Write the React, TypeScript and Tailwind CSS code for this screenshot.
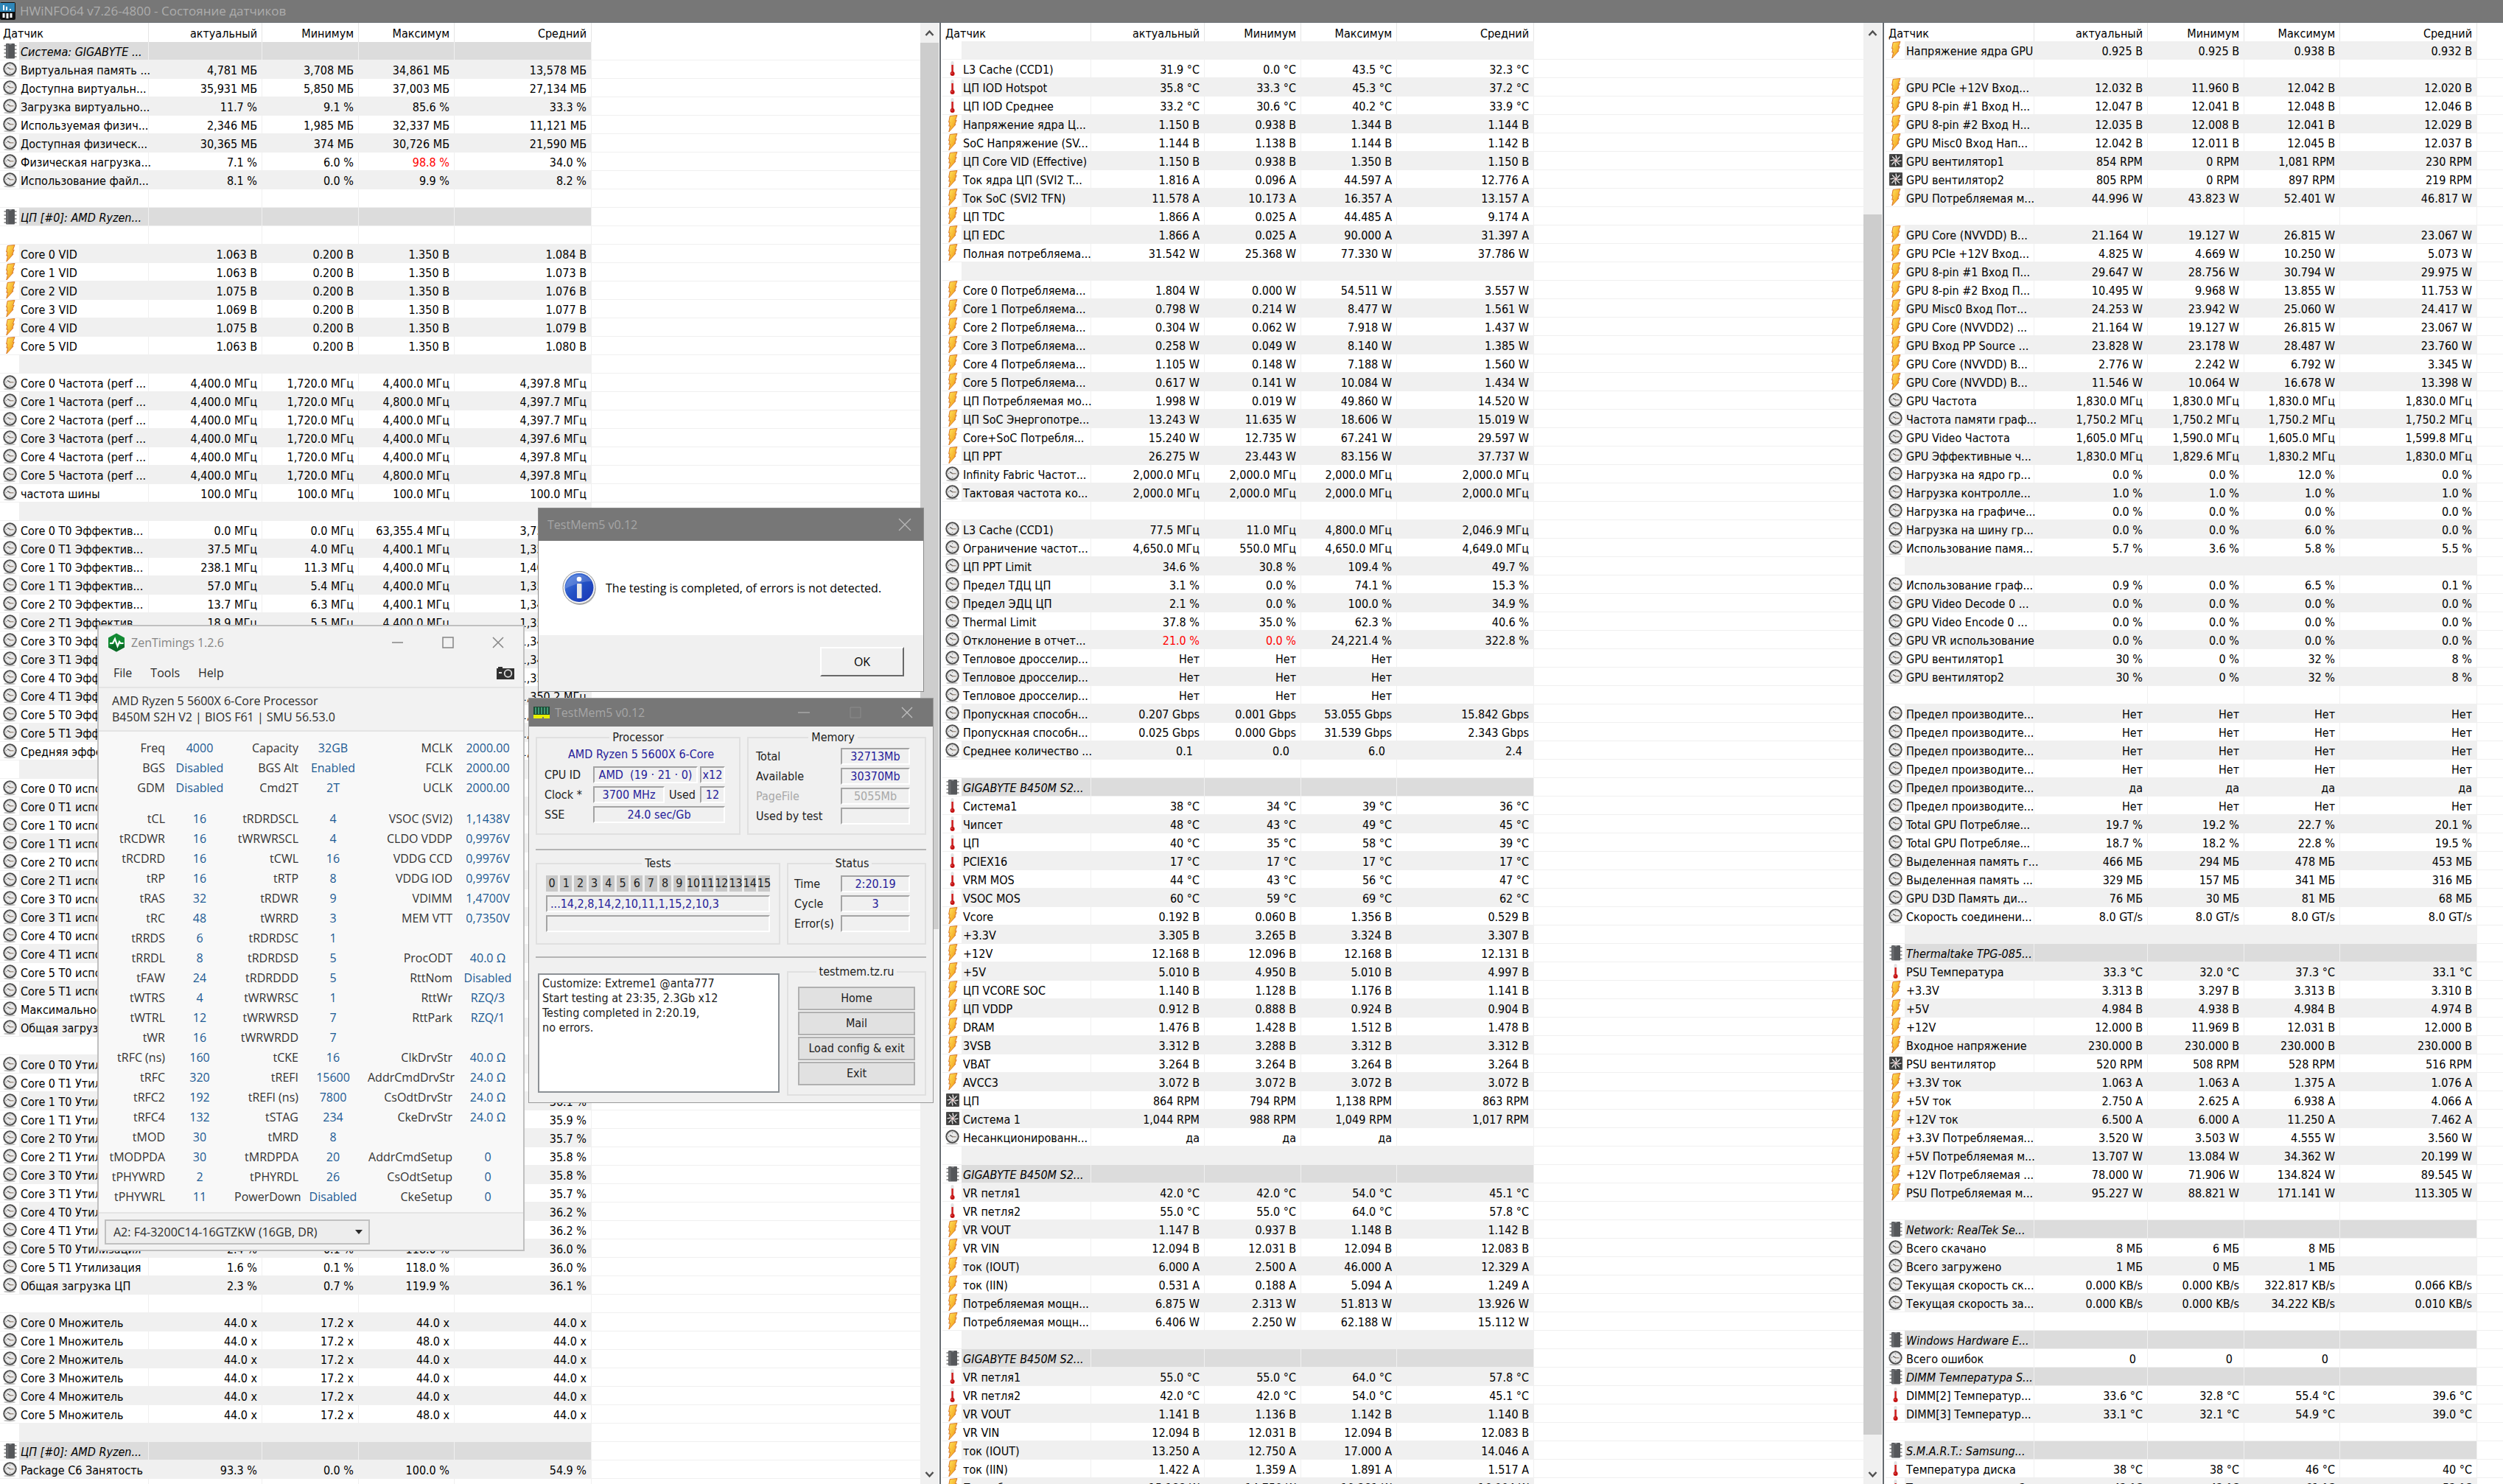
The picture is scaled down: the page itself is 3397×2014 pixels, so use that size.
import type { ReactNode } from "react";
import clsx from "clsx";

type IconKind = "clock" | "bolt" | "temp" | "fan" | "chip";

// One sensor per line: icon | name | current | min | max | avg.
// Empty line = spacer row, leading "!" = value out of range.
const SYSTEM_ROWS = `
chip|Система: GIGABYTE ...
clock|Виртуальная память ...|4,781 МБ|3,708 МБ|34,861 МБ|13,578 МБ
clock|Доступна виртуальн...|35,931 МБ|5,850 МБ|37,003 МБ|27,134 МБ
clock|Загрузка виртуально...|11.7 %|9.1 %|85.6 %|33.3 %
clock|Используемая физич...|2,346 МБ|1,985 МБ|32,337 МБ|11,121 МБ
clock|Доступная физическ...|30,365 МБ|374 МБ|30,726 МБ|21,590 МБ
clock|Физическая нагрузка...|7.1 %|6.0 %|!98.8 %|34.0 %
clock|Использование файл...|8.1 %|0.0 %|9.9 %|8.2 %

chip|ЦП [#0]: AMD Ryzen...

bolt|Core 0 VID|1.063 В|0.200 В|1.350 В|1.084 В
bolt|Core 1 VID|1.063 В|0.200 В|1.350 В|1.073 В
bolt|Core 2 VID|1.075 В|0.200 В|1.350 В|1.076 В
bolt|Core 3 VID|1.069 В|0.200 В|1.350 В|1.077 В
bolt|Core 4 VID|1.075 В|0.200 В|1.350 В|1.079 В
bolt|Core 5 VID|1.063 В|0.200 В|1.350 В|1.080 В

clock|Core 0 Частота (perf ...|4,400.0 МГц|1,720.0 МГц|4,400.0 МГц|4,397.8 МГц
clock|Core 1 Частота (perf ...|4,400.0 МГц|1,720.0 МГц|4,800.0 МГц|4,397.7 МГц
clock|Core 2 Частота (perf ...|4,400.0 МГц|1,720.0 МГц|4,400.0 МГц|4,397.7 МГц
clock|Core 3 Частота (perf ...|4,400.0 МГц|1,720.0 МГц|4,400.0 МГц|4,397.6 МГц
clock|Core 4 Частота (perf ...|4,400.0 МГц|1,720.0 МГц|4,400.0 МГц|4,397.8 МГц
clock|Core 5 Частота (perf ...|4,400.0 МГц|1,720.0 МГц|4,800.0 МГц|4,397.8 МГц
clock|частота шины|100.0 МГц|100.0 МГц|100.0 МГц|100.0 МГц

clock|Core 0 T0 Эффектив...|0.0 МГц|0.0 МГц|63,355.4 МГц|3,752.1 МГц
clock|Core 0 T1 Эффектив...|37.5 МГц|4.0 МГц|4,400.1 МГц|1,352.4 МГц
clock|Core 1 T0 Эффектив...|238.1 МГц|11.3 МГц|4,400.0 МГц|1,401.7 МГц
clock|Core 1 T1 Эффектив...|57.0 МГц|5.4 МГц|4,400.0 МГц|1,350.9 МГц
clock|Core 2 T0 Эффектив...|13.7 МГц|6.3 МГц|4,400.1 МГц|1,348.3 МГц
clock|Core 2 T1 Эффектив...|18.9 МГц|5.5 МГц|4,400.0 МГц|1,351.6 МГц
clock|Core 3 T0 Эффектив...|21.4 МГц|5.1 МГц|4,400.0 МГц|1,349.8 МГц
clock|Core 3 T1 Эффектив...|16.2 МГц|4.8 МГц|4,400.0 МГц|1,347.5 МГц
clock|Core 4 T0 Эффектив...|12.9 МГц|5.0 МГц|4,400.1 МГц|1,353.0 МГц
clock|Core 4 T1 Эффектив...|10.8 МГц|4.9 МГц|4,400.0 МГц|1,350.2 МГц
clock|Core 5 T0 Эффектив...|14.1 МГц|5.2 МГц|4,400.0 МГц|1,346.9 МГц
clock|Core 5 T1 Эффектив...|11.6 МГц|4.7 МГц|4,400.0 МГц|1,348.8 МГц
clock|Средняя эффективн...|37.7 МГц|8.1 МГц|9,312.9 МГц|1,556.1 МГц

clock|Core 0 T0 использов...|2.1 %|0.0 %|100.0 %|34.2 %
clock|Core 0 T1 использов...|0.8 %|0.0 %|100.0 %|33.1 %
clock|Core 1 T0 использов...|3.1 %|0.0 %|100.0 %|34.0 %
clock|Core 1 T1 использов...|0.8 %|0.0 %|100.0 %|33.0 %
clock|Core 2 T0 использов...|0.0 %|0.0 %|100.0 %|33.5 %
clock|Core 2 T1 использов...|0.0 %|0.0 %|100.0 %|33.3 %
clock|Core 3 T0 использов...|1.6 %|0.0 %|100.0 %|33.6 %
clock|Core 3 T1 использов...|0.0 %|0.0 %|100.0 %|33.2 %
clock|Core 4 T0 использов...|0.8 %|0.0 %|100.0 %|33.4 %
clock|Core 4 T1 использов...|0.0 %|0.0 %|100.0 %|33.4 %
clock|Core 5 T0 использов...|0.0 %|0.0 %|100.0 %|33.2 %
clock|Core 5 T1 использов...|0.0 %|0.0 %|100.0 %|33.3 %
clock|Максимальное испо...|3.1 %|0.0 %|100.0 %|38.2 %
clock|Общая загрузка ЦП|0.8 %|0.0 %|100.0 %|33.4 %

clock|Core 0 T0 Утилизация|2.9 %|0.2 %|118.0 %|36.8 %
clock|Core 0 T1 Утилизация|1.9 %|0.1 %|118.0 %|36.0 %
clock|Core 1 T0 Утилизация|5.2 %|0.3 %|118.0 %|36.1 %
clock|Core 1 T1 Утилизация|1.8 %|0.1 %|118.0 %|35.9 %
clock|Core 2 T0 Утилизация|1.3 %|0.1 %|118.0 %|35.7 %
clock|Core 2 T1 Утилизация|1.2 %|0.1 %|118.0 %|35.8 %
clock|Core 3 T0 Утилизация|2.0 %|0.1 %|118.0 %|35.8 %
clock|Core 3 T1 Утилизация|1.1 %|0.1 %|118.0 %|35.7 %
clock|Core 4 T0 Утилизация|1.7 %|0.1 %|118.0 %|36.2 %
clock|Core 4 T1 Утилизация|1.4 %|0.1 %|118.0 %|36.2 %
clock|Core 5 T0 Утилизация|2.4 %|0.1 %|118.0 %|36.0 %
clock|Core 5 T1 Утилизация|1.6 %|0.1 %|118.0 %|36.0 %
clock|Общая загрузка ЦП|2.3 %|0.7 %|119.9 %|36.1 %

clock|Core 0 Множитель|44.0 x|17.2 x|44.0 x|44.0 x
clock|Core 1 Множитель|44.0 x|17.2 x|48.0 x|44.0 x
clock|Core 2 Множитель|44.0 x|17.2 x|44.0 x|44.0 x
clock|Core 3 Множитель|44.0 x|17.2 x|44.0 x|44.0 x
clock|Core 4 Множитель|44.0 x|17.2 x|44.0 x|44.0 x
clock|Core 5 Множитель|44.0 x|17.2 x|48.0 x|44.0 x

chip|ЦП [#0]: AMD Ryzen...
clock|Package C6 Занятость|93.3 %|0.0 %|100.0 %|54.9 %

`;

const BOARD_ROWS = `

temp|L3 Cache (CCD1)|31.9 °C|0.0 °C|43.5 °C|32.3 °C
temp|ЦП IOD Hotspot|35.8 °C|33.3 °C|45.3 °C|37.2 °C
temp|ЦП IOD Среднее|33.2 °C|30.6 °C|40.2 °C|33.9 °C
bolt|Напряжение ядра Ц...|1.150 В|0.938 В|1.344 В|1.144 В
bolt|SoC Напряжение (SV...|1.144 В|1.138 В|1.144 В|1.142 В
bolt|ЦП Core VID (Effective)|1.150 В|0.938 В|1.350 В|1.150 В
bolt|Ток ядра ЦП (SVI2 T...|1.816 A|0.096 A|44.597 A|12.776 A
bolt|Ток SoC (SVI2 TFN)|11.578 A|10.173 A|16.357 A|13.157 A
bolt|ЦП TDC|1.866 A|0.025 A|44.485 A|9.174 A
bolt|ЦП EDC|1.866 A|0.025 A|90.000 A|31.397 A
bolt|Полная потребляема...|31.542 W|25.368 W|77.330 W|37.786 W

bolt|Core 0 Потребляема...|1.804 W|0.000 W|54.511 W|3.557 W
bolt|Core 1 Потребляема...|0.798 W|0.214 W|8.477 W|1.561 W
bolt|Core 2 Потребляема...|0.304 W|0.062 W|7.918 W|1.437 W
bolt|Core 3 Потребляема...|0.258 W|0.049 W|8.140 W|1.385 W
bolt|Core 4 Потребляема...|1.105 W|0.148 W|7.188 W|1.560 W
bolt|Core 5 Потребляема...|0.617 W|0.141 W|10.084 W|1.434 W
bolt|ЦП Потребляемая мо...|1.998 W|0.019 W|49.860 W|14.520 W
bolt|ЦП SoC Энергопотре...|13.243 W|11.635 W|18.606 W|15.019 W
bolt|Core+SoC Потребля...|15.240 W|12.735 W|67.241 W|29.597 W
bolt|ЦП PPT|26.275 W|23.443 W|83.156 W|37.737 W
clock|Infinity Fabric Частот...|2,000.0 МГц|2,000.0 МГц|2,000.0 МГц|2,000.0 МГц
clock|Тактовая частота ко...|2,000.0 МГц|2,000.0 МГц|2,000.0 МГц|2,000.0 МГц

clock|L3 Cache (CCD1)|77.5 МГц|11.0 МГц|4,800.0 МГц|2,046.9 МГц
clock|Ограничение частот...|4,650.0 МГц|550.0 МГц|4,650.0 МГц|4,649.0 МГц
clock|ЦП PPT Limit|34.6 %|30.8 %|109.4 %|49.7 %
clock|Предел ТДЦ ЦП|3.1 %|0.0 %|74.1 %|15.3 %
clock|Предел ЭДЦ ЦП|2.1 %|0.0 %|100.0 %|34.9 %
clock|Thermal Limit|37.8 %|35.0 %|62.3 %|40.6 %
clock|Отклонение в отчет...|!21.0 %|!0.0 %|24,221.4 %|322.8 %
clock|Тепловое дросселир...|Нет|Нет|Нет
clock|Тепловое дросселир...|Нет|Нет|Нет
clock|Тепловое дросселир...|Нет|Нет|Нет
clock|Пропускная способн...|0.207 Gbps|0.001 Gbps|53.055 Gbps|15.842 Gbps
clock|Пропускная способн...|0.025 Gbps|0.000 Gbps|31.539 Gbps|2.343 Gbps
clock|Среднее количество ...|0.1 _|0.0 _|6.0 _|2.4 _

chip|GIGABYTE B450M S2...
temp|Система1|38 °C|34 °C|39 °C|36 °C
temp|Чипсет|48 °C|43 °C|49 °C|45 °C
temp|ЦП|40 °C|35 °C|58 °C|39 °C
temp|PCIEX16|17 °C|17 °C|17 °C|17 °C
temp|VRM MOS|44 °C|43 °C|56 °C|47 °C
temp|VSOC MOS|60 °C|59 °C|69 °C|62 °C
bolt|Vcore|0.192 В|0.060 В|1.356 В|0.529 В
bolt|+3.3V|3.305 В|3.265 В|3.324 В|3.307 В
bolt|+12V|12.168 В|12.096 В|12.168 В|12.131 В
bolt|+5V|5.010 В|4.950 В|5.010 В|4.997 В
bolt|ЦП VCORE SOC|1.140 В|1.128 В|1.176 В|1.141 В
bolt|ЦП VDDP|0.912 В|0.888 В|0.924 В|0.904 В
bolt|DRAM|1.476 В|1.428 В|1.512 В|1.478 В
bolt|3VSB|3.312 В|3.288 В|3.312 В|3.312 В
bolt|VBAT|3.264 В|3.264 В|3.264 В|3.264 В
bolt|AVCC3|3.072 В|3.072 В|3.072 В|3.072 В
fan|ЦП|864 RPM|794 RPM|1,138 RPM|863 RPM
fan|Система 1|1,044 RPM|988 RPM|1,049 RPM|1,017 RPM
clock|Несанкционированн...|да|да|да

chip|GIGABYTE B450M S2...
temp|VR петля1|42.0 °C|42.0 °C|54.0 °C|45.1 °C
temp|VR петля2|55.0 °C|55.0 °C|64.0 °C|57.8 °C
bolt|VR VOUT|1.147 В|0.937 В|1.148 В|1.142 В
bolt|VR VIN|12.094 В|12.031 В|12.094 В|12.083 В
bolt|ток (IOUT)|6.000 A|2.500 A|46.000 A|12.329 A
bolt|ток (IIN)|0.531 A|0.188 A|5.094 A|1.249 A
bolt|Потребляемая мощн...|6.875 W|2.313 W|51.813 W|13.926 W
bolt|Потребляемая мощн...|6.406 W|2.250 W|62.188 W|15.112 W

chip|GIGABYTE B450M S2...
temp|VR петля1|55.0 °C|55.0 °C|64.0 °C|57.8 °C
temp|VR петля2|42.0 °C|42.0 °C|54.0 °C|45.1 °C
bolt|VR VOUT|1.141 В|1.136 В|1.142 В|1.140 В
bolt|VR VIN|12.094 В|12.031 В|12.094 В|12.083 В
bolt|ток (IOUT)|13.250 A|12.750 A|17.000 A|14.046 A
bolt|ток (IIN)|1.422 A|1.359 A|1.891 A|1.517 A
bolt|Потребляемая мощн...|15.188 W|14.750 W|19.281 W|16.004 W
`;

const GPU_ROWS = `
bolt|Напряжение ядра GPU|0.925 В|0.925 В|0.938 В|0.932 В

bolt|GPU PCIe +12V Вход...|12.032 В|11.960 В|12.042 В|12.020 В
bolt|GPU 8-pin #1 Вход Н...|12.047 В|12.041 В|12.048 В|12.046 В
bolt|GPU 8-pin #2 Вход Н...|12.035 В|12.008 В|12.041 В|12.029 В
bolt|GPU Misc0 Вход Нап...|12.042 В|12.011 В|12.045 В|12.037 В
fan|GPU вентилятор1|854 RPM|0 RPM|1,081 RPM|230 RPM
fan|GPU вентилятор2|805 RPM|0 RPM|897 RPM|219 RPM
bolt|GPU Потребляемая м...|44.996 W|43.823 W|52.401 W|46.817 W

bolt|GPU Core (NVVDD) В...|21.164 W|19.127 W|26.815 W|23.067 W
bolt|GPU PCIe +12V Вход...|4.825 W|4.669 W|10.250 W|5.073 W
bolt|GPU 8-pin #1 Вход П...|29.647 W|28.756 W|30.794 W|29.975 W
bolt|GPU 8-pin #2 Вход П...|10.495 W|9.968 W|13.855 W|11.753 W
bolt|GPU Misc0 Вход Пот...|24.253 W|23.942 W|25.060 W|24.417 W
bolt|GPU Core (NVVDD2) ...|21.164 W|19.127 W|26.815 W|23.067 W
bolt|GPU Вход PP Source ...|23.828 W|23.178 W|28.487 W|23.760 W
bolt|GPU Core (NVVDD) В...|2.776 W|2.242 W|6.792 W|3.345 W
bolt|GPU Core (NVVDD) В...|11.546 W|10.064 W|16.678 W|13.398 W
clock|GPU Частота|1,830.0 МГц|1,830.0 МГц|1,830.0 МГц|1,830.0 МГц
clock|Частота памяти граф...|1,750.2 МГц|1,750.2 МГц|1,750.2 МГц|1,750.2 МГц
clock|GPU Video Частота|1,605.0 МГц|1,590.0 МГц|1,605.0 МГц|1,599.8 МГц
clock|GPU Эффективные ч...|1,830.0 МГц|1,829.6 МГц|1,830.2 МГц|1,830.0 МГц
clock|Нагрузка на ядро гр...|0.0 %|0.0 %|12.0 %|0.0 %
clock|Нагрузка контролле...|1.0 %|1.0 %|1.0 %|1.0 %
clock|Нагрузка на графиче...|0.0 %|0.0 %|0.0 %|0.0 %
clock|Нагрузка на шину гр...|0.0 %|0.0 %|6.0 %|0.0 %
clock|Использование памя...|5.7 %|3.6 %|5.8 %|5.5 %

clock|Использование граф...|0.9 %|0.0 %|6.5 %|0.1 %
clock|GPU Video Decode 0 ...|0.0 %|0.0 %|0.0 %|0.0 %
clock|GPU Video Encode 0 ...|0.0 %|0.0 %|0.0 %|0.0 %
clock|GPU VR использование|0.0 %|0.0 %|0.0 %|0.0 %
clock|GPU вентилятор1|30 %|0 %|32 %|8 %
clock|GPU вентилятор2|30 %|0 %|32 %|8 %

clock|Предел производите...|Нет|Нет|Нет|Нет
clock|Предел производите...|Нет|Нет|Нет|Нет
clock|Предел производите...|Нет|Нет|Нет|Нет
clock|Предел производите...|Нет|Нет|Нет|Нет
clock|Предел производите...|да|да|да|да
clock|Предел производите...|Нет|Нет|Нет|Нет
clock|Total GPU Потребляе...|19.7 %|19.2 %|22.7 %|20.1 %
clock|Total GPU Потребляе...|18.7 %|18.2 %|22.8 %|19.5 %
clock|Выделенная память г...|466 МБ|294 МБ|478 МБ|453 МБ
clock|Выделенная память ...|329 МБ|157 МБ|341 МБ|316 МБ
clock|GPU D3D Память ди...|76 МБ|30 МБ|81 МБ|68 МБ
clock|Скорость соединени...|8.0 GT/s|8.0 GT/s|8.0 GT/s|8.0 GT/s

chip|Thermaltake TPG-085...
temp|PSU Температура|33.3 °C|32.0 °C|37.3 °C|33.1 °C
bolt|+3.3V|3.313 В|3.297 В|3.313 В|3.310 В
bolt|+5V|4.984 В|4.938 В|4.984 В|4.974 В
bolt|+12V|12.000 В|11.969 В|12.031 В|12.000 В
bolt|Входное напряжение|230.000 В|230.000 В|230.000 В|230.000 В
fan|PSU вентилятор|520 RPM|508 RPM|528 RPM|516 RPM
bolt|+3.3V ток|1.063 A|1.063 A|1.375 A|1.076 A
bolt|+5V ток|2.750 A|2.625 A|6.938 A|4.066 A
bolt|+12V ток|6.500 A|6.000 A|11.250 A|7.462 A
bolt|+3.3V Потребляемая...|3.520 W|3.503 W|4.555 W|3.560 W
bolt|+5V Потребляемая м...|13.707 W|13.084 W|34.362 W|20.199 W
bolt|+12V Потребляемая ...|78.000 W|71.906 W|134.824 W|89.545 W
bolt|PSU Потребляемая м...|95.227 W|88.821 W|171.141 W|113.305 W

chip|Network: RealTek Se...
clock|Всего скачано|8 МБ|6 МБ|8 МБ
clock|Всего загружено|1 МБ|0 МБ|1 МБ
clock|Текущая скорость ск...|0.000 KB/s|0.000 KB/s|322.817 KB/s|0.066 KB/s
clock|Текущая скорость за...|0.000 KB/s|0.000 KB/s|34.222 KB/s|0.010 KB/s

chip|Windows Hardware E...
clock|Всего ошибок|0 _|0 _|0 _
chip|DIMM Температура S...
temp|DIMM[2] Температур...|33.6 °C|32.8 °C|55.4 °C|39.6 °C
temp|DIMM[3] Температур...|33.1 °C|32.1 °C|54.9 °C|39.0 °C

chip|S.M.A.R.T.: Samsung...
temp|Температура диска|38 °C|38 °C|46 °C|40 °C
temp|Температура диска 2|42 °C|42 °C|61 °C|52 °C
`;

const parseRows = (text: string) => text.slice(1, -1).split("\n").map((line) => line.split("|"));

const SensorIcon = ({ kind }: { kind: IconKind }) => {
    switch (kind) {
        case "clock":
            return (
                <svg width="24" height="24" viewBox="0 0 24 24" aria-hidden="true">
                    <ellipse cx="13" cy="21" rx="8" ry="1.5" fill="#c4c4c4" />
                    <circle cx="13.5" cy="11.5" r="8.2" fill="#e9e9e9" stroke="#4b4b4b" strokeWidth="2" />
                    <circle cx="13.5" cy="11.5" r="6.6" fill="none" stroke="#c9c9c9" />
                    <path d="M13.5 6v1.2M13.5 16v1.2M8 11.5h1.2" stroke="#888" />
                    <path d="M10 9.5l4 2.3" stroke="#444" strokeWidth="1.2" />
                    <path d="M13 11.8h5.5" stroke="#8d7b6c" strokeWidth="1.2" />
                </svg>
            );
        case "bolt":
            return (
                <svg width="24" height="24" viewBox="0 0 24 24" aria-hidden="true">
                    <defs>
                        <linearGradient id="boltFill" x1="0" y1="0" x2="1" y2="1">
                            <stop offset="0" stopColor="#ffe65c" />
                            <stop offset="1" stopColor="#f08c0a" />
                        </linearGradient>
                    </defs>
                    <path d="M10.2 1.5L20 .5l-2.6 7 1.8-.3-2.6 6 1.5-.3L8.8 23l1.8-8.2-1.8.4 1.2-5.4-1.4.2z" fill="url(#boltFill)" stroke="#d9782a" strokeWidth="1" />
                </svg>
            );
        case "temp":
            return (
                <svg width="24" height="24" viewBox="0 0 24 24" aria-hidden="true">
                    <rect x="11.5" y="2" width="4" height="17" rx="2" fill="#e2e2e2" />
                    <rect x="12.4" y="7" width="2.4" height="12" fill="#d01a1a" />
                    <circle cx="13.6" cy="19" r="3" fill="#c41212" />
                    <circle cx="12.8" cy="18.2" r=".8" fill="#f08080" />
                </svg>
            );
        case "fan":
            return (
                <svg width="24" height="24" viewBox="0 0 24 24" aria-hidden="true">
                    <rect x="5" y="3" width="18" height="18" rx="1" fill="#4a4a4a" />
                    <circle cx="14" cy="12" r="8" fill="#333" />
                    <path d="M14 4.500l1 5M19.500 6.500l-3.500 4M21.500 12l-5 1M19 17.500l-3.500-3.500M14 19.500l-1-5M8.500 17.500l3.500-4M6.500 12l5-1M9 6.500l3.500 3.500" stroke="#dcdcdc" strokeWidth="1.600" />
                    <circle cx="14" cy="12" r="2.400" fill="#f3d3d3" stroke="#8a8a8a" strokeWidth=".8" />
                </svg>
            );
        case "chip":
            return (
                <svg width="24" height="24" viewBox="0 0 24 24" aria-hidden="true">
                    <path d="M5.500 5h3M5.500 10h3M5.500 15h3M5.500 20h3M18.500 5h4M18.500 10h4M18.500 15h4M18.500 20h4" stroke="#9a9a9a" strokeWidth="2" />
                    <rect x="8" y="2" width="12" height="20.500" rx="1" fill="#55575a" />
                    <path d="M12 2a2 2 0 0 0 4 0" fill="#8a8c8e" />
                    <rect x="8.500" y="3" width="3" height="19" fill="#6a6c6f" />
                </svg>
            );
    }
};

const Value = ({ text = "" }: { text?: string }) => (
    <td className={clsx("border-r border-b border-[#f0f0f0] pt-[3px] pr-[6px] text-right", text.startsWith("!") && "text-[#ff0000]")}>
        {/* "_" stands for a missing unit */}
        {text.replace("!", "").replace(" _", "\u00a0\u00a0")}
    </td>
);

const SensorTable = ({ rows, label, headerClass, oddShaded }: { rows: string[][]; label: string; headerClass: string; oddShaded: boolean }) => (
    <table aria-label={label} className="w-full table-fixed border-separate border-spacing-0 whitespace-nowrap text-[16px] leading-[21px]">
        <colgroup>
            <col className="w-[26px]" />
            <col className="w-[176px]" />
            <col className="w-[154px]" />
            <col className="w-[131px]" />
            <col className="w-[130px]" />
            <col className="w-[186px]" />
            <col />
        </colgroup>
        <thead>
            <tr className={headerClass}>
                <th colSpan={2} className="border-r border-[#e5e5e5] pt-[3px] pl-[4px] text-left font-normal">Датчик</th>
                {["актуальный", "Минимум", "Максимум", "Средний"].map((title) => (
                    <th key={title} className="border-r border-[#e5e5e5] pt-[3px] pr-[6px] text-right font-normal">{title}</th>
                ))}
                <th />
            </tr>
        </thead>
        <tbody>
            {rows.map(([icon, name, ...values], i) => {
                const section = icon === "chip";
                const shaded = (i % 2 === 1) === oddShaded;
                return (
                    <tr key={i} className={clsx("h-[25px]", section ? "bg-[#dcdcdc]" : shaded ? "bg-[#f0f0f0]" : "bg-white")}>
                        <td className="h-[25px] border-b border-[#f0f0f0] bg-white p-0">
                            {icon && <SensorIcon kind={icon as IconKind} />}
                        </td>
                        <td className={clsx("border-r border-b border-[#f0f0f0] pt-[3px] pl-[2px]", section && "italic")}>{name}</td>
                        {[0, 1, 2, 3].map((n) => <Value key={n} text={values[n]} />)}
                        <td className="border-b border-[#f0f0f0] bg-white" />
                    </tr>
                );
            })}
        </tbody>
    </table>
);

const ScrollBar = ({ spacer, thumb }: { spacer: string; thumb: string }) => (
    <div className="flex w-[25px] shrink-0 flex-col bg-[#f0f0f0]">
        <button aria-label="Вверх" className="flex h-[27px] shrink-0 items-center justify-center">
            <svg width="13" height="10" viewBox="0 0 13 10"><path d="M1.500 8l5-5.500 5 5.500" fill="none" stroke="#505050" strokeWidth="2.500" /></svg>
        </button>
        <div className={spacer} />
        <div className={clsx("bg-[#cdcdcd]", thumb)} />
        <div className="flex-1" />
        <button aria-label="Вниз" className="flex h-[27px] shrink-0 items-center justify-center">
            <svg width="13" height="10" viewBox="0 0 13 10"><path d="M1.500 2l5 5.500 5-5.500" fill="none" stroke="#505050" strokeWidth="2.500" /></svg>
        </button>
    </div>
);

// ---------- ZenTimings ----------

const ZEN_CLOCKS = [
    ["Freq", "4000", "Capacity", "32GB", "MCLK", "2000.00"],
    ["BGS", "Disabled", "BGS Alt", "Enabled", "FCLK", "2000.00"],
    ["GDM", "Disabled", "Cmd2T", "2T", "UCLK", "2000.00"],
];

const ZEN_TIMINGS = [
    ["tCL", "16", "tRDRDSCL", "4", "VSOC (SVI2)", "1,1438V"],
    ["tRCDWR", "16", "tWRWRSCL", "4", "CLDO VDDP", "0,9976V"],
    ["tRCDRD", "16", "tCWL", "16", "VDDG CCD", "0,9976V"],
    ["tRP", "16", "tRTP", "8", "VDDG IOD", "0,9976V"],
    ["tRAS", "32", "tRDWR", "9", "VDIMM", "1,4700V"],
    ["tRC", "48", "tWRRD", "3", "MEM VTT", "0,7350V"],
    ["tRRDS", "6", "tRDRDSC", "1", "", ""],
    ["tRRDL", "8", "tRDRDSD", "5", "ProcODT", "40.0 Ω"],
    ["tFAW", "24", "tRDRDDD", "5", "RttNom", "Disabled"],
    ["tWTRS", "4", "tWRWRSC", "1", "RttWr", "RZQ/3"],
    ["tWTRL", "12", "tWRWRSD", "7", "RttPark", "RZQ/1"],
    ["tWR", "16", "tWRWRDD", "7", "", ""],
    ["tRFC (ns)", "160", "tCKE", "16", "ClkDrvStr", "40.0 Ω"],
    ["tRFC", "320", "tREFI", "15600", "AddrCmdDrvStr", "24.0 Ω"],
    ["tRFC2", "192", "tREFI (ns)", "7800", "CsOdtDrvStr", "24.0 Ω"],
    ["tRFC4", "132", "tSTAG", "234", "CkeDrvStr", "24.0 Ω"],
    ["tMOD", "30", "tMRD", "8", "", ""],
    ["tMODPDA", "30", "tMRDPDA", "20", "AddrCmdSetup", "0"],
    ["tPHYWRD", "2", "tPHYRDL", "26", "CsOdtSetup", "0"],
    ["tPHYWRL", "11", "PowerDown", "Disabled", "CkeSetup", "0"],
];

const TimingRows = ({ rows }: { rows: string[][] }) => (
    <tbody>
        {rows.map((cells) => (
            <tr key={cells[0]} className="h-[27px]">
                {cells.map((cell, i) => (
                    <td key={i} className={i % 2 ? "text-center text-[#1b5a93]" : "text-right text-[#333333]"}>{cell}</td>
                ))}
            </tr>
        ))}
    </tbody>
);

const ZenTimings = () => (
    <section aria-label="ZenTimings" className="absolute top-[848px] left-[132px] w-[580px] border-2 border-[#c0c0c0] bg-[#f2f2f2] font-['Open_Sans','Noto_Sans',sans-serif] text-[16px] leading-[22px] text-[#2b2b2b]">
        <header className="flex h-[44px] items-center pl-[12px] text-[#858585]">
            <svg width="24" height="26" viewBox="0 0 24 26" aria-hidden="true">
                <path d="M12 .5l11 6v13l-11 6-11-6v-13z" fill="#128a33" />
                <path d="M12 25.500l-11-6 8-5 6 4 8-4v5z" fill="#0c6b27" />
                <path d="M3 14h4l3-6 3.500 10 2.500-6 1.500 2h4" fill="none" stroke="#fff" strokeWidth="2.200" />
            </svg>
            <h2 className="flex-1 pl-[8px]">ZenTimings 1.2.6</h2>
            <button aria-label="Minimize" className="flex w-[68px] justify-center"><svg width="16" height="16"><path d="M0 8h15" stroke="#858585" strokeWidth="1.500" /></svg></button>
            <button aria-label="Maximize" className="flex w-[68px] justify-center"><svg width="16" height="16"><path d="M1 1h14v14h-14z" fill="none" stroke="#858585" strokeWidth="1.500" /></svg></button>
            <button aria-label="Close" className="flex w-[68px] justify-center"><svg width="16" height="16"><path d="M1 1l14 14M15 1L1 15" stroke="#858585" strokeWidth="1.500" /></svg></button>
        </header>
        <nav className="flex h-[40px] items-center gap-[25px] border-b-2 border-[#e4e4e4] pr-[12px] pl-[20px]">
            <button>File</button>
            <button>Tools</button>
            <button>Help</button>
            <button aria-label="Screenshot" className="ml-auto">
                <svg width="24" height="18" viewBox="0 0 24 18">
                    <path d="M0 3h2V1h6v2h16v15H0z" fill="#303030" />
                    <circle cx="15.500" cy="10" r="4.800" fill="none" stroke="#ddd" strokeWidth="1.800" />
                    <path d="M3 9h4" stroke="#ddd" strokeWidth="2" />
                </svg>
            </button>
        </nav>
        <div className="border-b-2 border-[#e4e4e4] px-[18px] pt-[6px] pb-[7px]">
            <p>AMD Ryzen 5 5600X 6-Core Processor</p>
            <p>B450M S2H V2 | BIOS F61 | SMU 56.53.0</p>
        </div>
        <div className="border-b-2 border-[#e4e4e4] bg-[#f8f8f8] pt-[8px] pb-[8px]">
            <table aria-label="Memory timings" className="w-full table-fixed whitespace-nowrap">
                <colgroup>
                    <col className="w-[90px]" />
                    <col className="w-[94px]" />
                    <col className="w-[87px]" />
                    <col className="w-[94px]" />
                    <col className="w-[115px]" />
                    <col />
                </colgroup>
                <TimingRows rows={ZEN_CLOCKS} />
                <tbody><tr className="h-[15px]"><td colSpan={6} /></tr></tbody>
                <TimingRows rows={ZEN_TIMINGS} />
            </table>
        </div>
        <footer className="px-[8px] pt-[8px] pb-[7px]">
            <div className="relative w-[360px]">
                <select aria-label="Memory module" className="block h-[34px] w-full appearance-none border-2 border-[#c0c0c0] bg-[#ededed] pl-[10px]">
                    <option>A2: F4-3200C14-16GTZKW (16GB, DR)</option>
                </select>
                <svg width="10" height="6" viewBox="0 0 10 6" aria-hidden="true" className="pointer-events-none absolute top-[14px] right-[10px]"><path d="M0 0h10L5 6z" fill="#2b2b2b" /></svg>
            </div>
        </footer>
    </section>
);

// ---------- TestMem5 ----------

const MessageBox = () => (
    <section aria-label="TestMem5 message" className="absolute top-[689px] left-[730px] w-[524px] border border-[#8a8a8a] bg-white font-['Open_Sans','Noto_Sans',sans-serif] text-[16px] text-black">
        <header className="flex h-[44px] items-center bg-[#777777] pr-[16px] pl-[12px] text-[#a6a6a6]">
            <h2 className="flex-1">TestMem5 v0.12</h2>
            <button aria-label="Close"><svg width="18" height="18"><path d="M1 1l16 16M17 1L1 17" stroke="#b8b8b8" strokeWidth="1.300" /></svg></button>
        </header>
        <div className="flex h-[128px] items-center gap-[13px] pl-[32px]">
            <svg width="46" height="48" viewBox="0 0 46 48" aria-hidden="true">
                <defs>
                    <linearGradient id="infoFill" x1="0" y1="0" x2="1" y2="1">
                        <stop offset="0" stopColor="#4b7fe0" />
                        <stop offset=".5" stopColor="#2350c4" />
                        <stop offset="1" stopColor="#1b35b4" />
                    </linearGradient>
                </defs>
                <circle cx="24" cy="25.500" r="21.500" fill="#b5b5b5" />
                <circle cx="23" cy="23.500" r="22" fill="#f4f4f4" stroke="#8f8f8f" />
                <circle cx="23" cy="23.500" r="19.500" fill="url(#infoFill)" />
                <path d="M4 25a19.500 19.500 0 0 1 36-10C28 14 14 20 4 25z" fill="#fff" opacity=".18" />
                <circle cx="23" cy="12" r="3.300" fill="#fff" />
                <rect x="20" y="18" width="6.500" height="20" rx="1" fill="#e8e8e8" />
            </svg>
            <p>The testing is completed, of errors is not detected.</p>
        </div>
        <div className="flex h-[76px] items-start justify-end bg-[#f0f0f0] pt-[16px] pr-[26px]">
            <button className="h-[40px] w-[114px] border-2 border-t-white border-r-[#696969] border-b-[#696969] border-l-white bg-[#f0f0f0]">OK</button>
        </div>
    </section>
);

const Group = ({ title, className, children }: { title: string; className?: string; children: ReactNode }) => (
    <fieldset className={clsx("min-w-0 border-2 border-[#e0e0e0]", className)}>
        <legend className="mx-auto px-[4px] leading-[20px]">{title}</legend>
        {children}
    </fieldset>
);

const Field = ({ value, label, className }: { value: string; label: string; className?: string }) => (
    <input
        readOnly
        aria-label={label}
        value={value}
        className={clsx("h-[23px] min-w-0 border-2 border-t-[#a4a4a4] border-r-white border-b-white border-l-[#a4a4a4] bg-[#f0f0f0] text-center outline-none", className ?? "w-[94px] text-[#26209a]")}
    />
);

const TestMem = () => (
    <section aria-label="TestMem5" className="absolute top-[947px] left-[717px] w-[550px] border border-[#9a9a9a] bg-[#f0f0f0] text-[16px] leading-[23px] text-[#1c1c1c]">
        <header className="flex h-[38px] items-center bg-[#777777] pl-[6px] font-['Open_Sans','Noto_Sans',sans-serif] text-[#a6a6a6]">
            <svg width="22" height="17" viewBox="0 0 22 17" aria-hidden="true">
                <rect width="22" height="11" fill="#1d4a35" />
                <path d="M3 1v9M7 1v9M11 1v9M15 1v9M19 1v9" stroke="#4fb58a" strokeWidth="1.500" />
                <path d="M0 11h22v5h-8v-2h-2v2H0z" fill="#e8f000" />
            </svg>
            <h2 className="flex-1 pl-[7px]">TestMem5 v0.12</h2>
            <button aria-label="Minimize" className="flex w-[70px] justify-center"><svg width="16" height="16"><path d="M0 8h16" stroke="#c0c0c0" /></svg></button>
            <button aria-label="Maximize" disabled className="flex w-[70px] justify-center"><svg width="16" height="16"><path d="M1 1h14v14h-14z" fill="none" stroke="#8c8c8c" /></svg></button>
            <button aria-label="Close" className="flex w-[70px] justify-center"><svg width="16" height="16"><path d="M1 1l14 14M15 1L1 15" stroke="#c0c0c0" strokeWidth="1.300" /></svg></button>
        </header>
        <div className="px-[9px] pt-[5px] pb-[9px]">
            <div className="flex gap-[9px]">
                <Group title="Processor" className="h-[142px] w-[278px] px-[10px]">
                    <p className="h-[29px] pl-[8px] text-center leading-[26px] whitespace-nowrap text-[#26209a]">AMD Ryzen 5 5600X 6-Core</p>
                    <div className="grid grid-cols-[66px_minmax(0,1fr)] gap-y-[4px] pr-[9px] whitespace-nowrap">
                        <span>CPU ID</span>
                        <div className="flex gap-[3px]">
                            <Field label="CPU ID" value="AMD  (19 · 21 · 0)" className="w-0 flex-1 whitespace-pre text-[#26209a]" />
                            <Field label="Threads" value="x12" className="w-[34px] text-[#26209a]" />
                        </div>
                        <span>Clock *</span>
                        <div className="flex items-center gap-[6px]">
                            <Field label="Clock" value="3700 MHz" className="w-0 flex-1 text-[#26209a]" />
                            <span>Used</span>
                            <Field label="Used" value="12" className="w-[34px] text-[#26209a]" />
                        </div>
                        <span>SSE</span>
                        <Field label="SSE" value="24.0 sec/Gb" className="w-full text-[#26209a]" />
                    </div>
                </Group>
                <Group title="Memory" className="h-[142px] flex-1 pr-[20px] pl-[10px]">
                    <div className="grid grid-cols-[1fr_94px] gap-y-[4px] pt-[4px]">
                        <span>Total</span>
                        <Field label="Total" value="32713Mb" />
                        <span>Available</span>
                        <Field label="Available" value="30370Mb" />
                        <span className="text-[#a8a8a8]">PageFile</span>
                        <Field label="PageFile" value="5055Mb" className="w-[94px] text-[#a8a8a8]" />
                        <span>Used by test</span>
                        <Field label="Used by test" value="" />
                    </div>
                </Group>
            </div>
            <hr className="mt-[19px] mb-[8px] border-t-2 border-[#b4b4b4]" />
            <div className="flex gap-[9px]">
                <Group title="Tests" className="h-[120px] w-[332px] px-[12px]">
                    <ol className="mt-[6px] grid grid-cols-[repeat(16,minmax(0,1fr))] gap-[3px] leading-[22px]">
                        {Array.from({ length: 16 }, (_, n) => (
                            <li key={n} className="flex h-[22px] justify-center bg-[#c8c8c8]">{n}</li>
                        ))}
                    </ol>
                    <Field label="Test order" value="...14,2,8,14,2,10,11,1,15,2,10,3" className="mt-[5px] block w-full pl-[4px] text-left! text-[#26209a]" />
                    <Field label="Test progress" value="" className="mt-[4px] block w-full" />
                </Group>
                <Group title="Status" className="h-[120px] flex-1 pr-[20px] pl-[8px]">
                    <div className="mt-[6px] grid grid-cols-[1fr_94px] gap-y-[4px] whitespace-nowrap">
                        <span>Time</span>
                        <Field label="Time" value="2:20.19" />
                        <span>Cycle</span>
                        <Field label="Cycle" value="3" />
                        <span>Error(s)</span>
                        <Field label="Errors" value="" />
                    </div>
                </Group>
            </div>
            <hr className="mt-[16px] mb-[9px] border-t-2 border-[#b4b4b4]" />
            <div className="flex gap-[10px]">
                <textarea
                    readOnly
                    aria-label="Log"
                    defaultValue={"Customize: Extreme1 @anta777\nStart testing at 23:35, 2.3Gb x12\nTesting completed in 2:20.19,\nno errors."}
                    className="mt-[12px] ml-[3px] h-[162px] w-[328px] resize-none overflow-hidden border-2 border-[#8c9196] bg-white px-[4px] py-[2px] leading-[20px] outline-none"
                />
                <Group title="testmem.tz.ru" className="h-[178px] flex-1 px-[13px]">
                    <div className="mt-[10px] flex flex-col gap-[2px]">
                        {["Home", "Mail", "Load config & exit", "Exit"].map((title) => (
                            <button key={title} className="h-[32px] border-2 border-[#b0b0b0] bg-[#e1e1e1] leading-[26px] whitespace-nowrap">{title}</button>
                        ))}
                    </div>
                </Group>
            </div>
        </div>
    </section>
);

export default function App() {
    return (
        <main className="relative flex h-screen w-full flex-col overflow-hidden bg-white font-['DejaVu_Sans_Condensed','DejaVu_Sans',sans-serif] text-black">
            <header className="flex h-[31px] shrink-0 items-center gap-[6px] border-b border-[#6c7277] bg-[#777777] font-['Open_Sans','Noto_Sans',sans-serif] text-[17px] text-[#adadad]">
                <svg width="21" height="24" viewBox="0 0 21 24" aria-hidden="true">
                    <rect width="21" height="24" rx="2" fill="#111" />
                    <rect y="1" width="20" height="12" fill="#2f86b8" />
                    <path d="M5 4v7M9 6v5M14 9v2" stroke="#fff" strokeWidth="2" />
                    <path d="M5 15v6M10 15v7M15 15v6" stroke="#fff" strokeWidth="3" />
                </svg>
                <h1>HWiNFO64 v7.26-4800 - Состояние датчиков</h1>
            </header>
            <div className="grid min-h-0 flex-1 grid-cols-[1277fr_1280fr_840fr]">
                <div className="flex min-w-0 overflow-hidden border-r-2 border-[#666b70] pr-px">
                    <div className="min-w-0 flex-1">
                        <SensorTable label="Система и ЦП" rows={parseRows(SYSTEM_ROWS)} headerClass="h-[26px]" oddShaded />
                    </div>
                    <ScrollBar spacer="hidden" thumb="h-[1203px]" />
                </div>
                <div className="flex min-w-0 overflow-hidden border-r-2 border-[#666b70] pr-px pl-[2px]">
                    <div className="min-w-0 flex-1">
                        <SensorTable label="Питание и плата" rows={parseRows(BOARD_ROWS)} headerClass="h-[25px]" oddShaded={false} />
                    </div>
                    <ScrollBar spacer="h-[233px]" thumb="h-[1656px]" />
                </div>
                <div className="min-w-0 overflow-hidden pl-[2px]">
                    <SensorTable label="GPU, БП и накопители" rows={parseRows(GPU_ROWS)} headerClass="h-[25px]" oddShaded={false} />
                </div>
            </div>
            <ZenTimings />
            <MessageBox />
            <TestMem />
        </main>
    );
}
